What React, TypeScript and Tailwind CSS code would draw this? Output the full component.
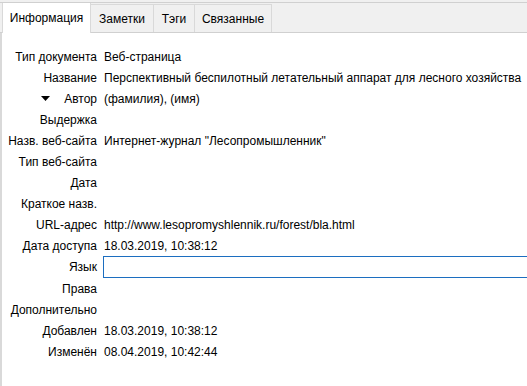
import React from 'react';

const tabs = [
  { name: 'Информация', w: 'w-[89px]' },
  { name: 'Заметки', w: 'w-[63px]' },
  { name: 'Тэги', w: 'w-[41px]' },
  { name: 'Связанные', w: 'w-[77px]' },
];

const rows: { label: string; value?: string; toggle?: boolean; input?: boolean }[] = [
  { label: 'Тип документа', value: 'Веб-страница' },
  { label: 'Название', value: 'Перспективный беспилотный летательный аппарат для лесного хозяйства' },
  { label: 'Автор', value: '(фамилия), (имя)', toggle: true },
  { label: 'Выдержка' },
  { label: 'Назв. веб-сайта', value: 'Интернет-журнал "Лесопромышленник"' },
  { label: 'Тип веб-сайта' },
  { label: 'Дата' },
  { label: 'Краткое назв.' },
  { label: 'URL-адрес', value: 'http://www.lesopromyshlennik.ru/forest/bla.html' },
  { label: 'Дата доступа', value: '18.03.2019, 10:38:12' },
  { label: 'Язык', input: true },
  { label: 'Права' },
  { label: 'Дополнительно' },
  { label: 'Добавлен', value: '18.03.2019, 10:38:12' },
  { label: 'Изменён', value: '08.04.2019, 10:42:44' },
];

const App: React.FC = () => {
  return (
    <div
      className="w-[527px] h-[386px] overflow-hidden bg-[#f0f0f0] text-[12px] text-black flex flex-col"
      style={{ fontFamily: '"Liberation Sans", Arial, sans-serif' }}
    >
      <div className="h-[2px] shrink-0" />
      <div className="h-[31px] shrink-0 border-t border-b border-[#d0d0d0] flex items-end pl-[2px]">
        {tabs.map((t, i) =>
          i === 0 ? (
            <div
              key={t.name}
              className={`${t.w} h-[30px] -mb-px bg-white border-l border-r border-[#d9d9d9] flex items-center justify-center`}
            >
              {t.name}
            </div>
          ) : (
            <div
              key={t.name}
              className={`${t.w} h-[28px] bg-[#f0f0f0] border-t border-r border-[#d9d9d9] flex items-center justify-center`}
            >
              {t.name}
            </div>
          )
        )}
      </div>
      <div className="flex-1 bg-white border-l-2 border-[#d9d9d9] pt-[13px] overflow-hidden">
        {rows.map((r) => (
          <div key={r.label} className={`flex items-center ${r.input ? 'h-[22px]' : 'h-[21px]'}`}>
            <div className="w-[95px] shrink-0 flex items-center justify-end whitespace-nowrap">
              {r.toggle && (
                <svg width="9" height="5" viewBox="0 0 9 5" className="mr-[14px]">
                  <path d="M0 0 L9 0 L4.5 5 Z" fill="#000" />
                </svg>
              )}
              {r.label}
            </div>
            {r.input ? (
              <div className="ml-[6px] h-[22px] flex-1 -mr-[4px] border border-[#1c6ec0] bg-white" />
            ) : (
              <div className="ml-[7px] whitespace-nowrap">{r.value}</div>
            )}
          </div>
        ))}
      </div>
    </div>
  );
};

export default App;
